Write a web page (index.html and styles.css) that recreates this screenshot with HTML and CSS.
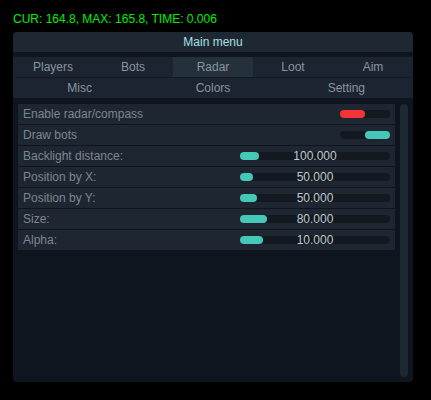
FILE: index.html
```html
<!DOCTYPE html>
<html lang="en">
<head>
    <meta charset="UTF-8">
    <meta name="viewport" content="width=device-width, initial-scale=1.0">
    <title>Main menu</title>
    <link rel="stylesheet" href="styles.css">
</head>
<body>

    <!-- Frame stats at the top -->
    <div class="stats">CUR: 164.8, MAX: 165.8, TIME: 0.006</div>

    <div class="window">
        <div class="title-bar">Main menu</div>

        <div class="tabs tabs-main">
            <div class="tab">Players</div>
            <div class="tab">Bots</div>
            <div class="tab active">Radar</div>
            <div class="tab">Loot</div>
            <div class="tab">Aim</div>
        </div>
        <div class="tabs tabs-sub">
            <div class="tab">Misc</div>
            <div class="tab">Colors</div>
            <div class="tab">Setting</div>
        </div>

        <div class="content">
            <div class="list">
                <div class="row">
                    <span class="label">Enable radar/compass</span>
                    <div class="toggle off"><div class="knob"></div></div>
                </div>
                <div class="row">
                    <span class="label">Draw bots</span>
                    <div class="toggle on"><div class="knob"></div></div>
                </div>
                <div class="row">
                    <span class="label">Backlight distance:</span>
                    <div class="slider">
                        <div class="fill" style="width: 19px"></div>
                        <span class="value">100.000</span>
                    </div>
                </div>
                <div class="row">
                    <span class="label">Position by X:</span>
                    <div class="slider">
                        <div class="fill" style="width: 13px"></div>
                        <span class="value">50.000</span>
                    </div>
                </div>
                <div class="row">
                    <span class="label">Position by Y:</span>
                    <div class="slider">
                        <div class="fill" style="width: 17px"></div>
                        <span class="value">50.000</span>
                    </div>
                </div>
                <div class="row">
                    <span class="label">Size:</span>
                    <div class="slider">
                        <div class="fill" style="width: 27px"></div>
                        <span class="value">80.000</span>
                    </div>
                </div>
                <div class="row">
                    <span class="label">Alpha:</span>
                    <div class="slider">
                        <div class="fill" style="width: 23px"></div>
                        <span class="value">10.000</span>
                    </div>
                </div>
            </div>
            <div class="scrollbar"></div>
        </div>
    </div>

</body>
</html>
```

FILE: styles.css
```css
body {
    margin: 0;
    background-color: #000;
    font-family: "Liberation Sans", Arial, sans-serif;
    font-size: 12px;
}

.stats {
    color: #00f000;
    padding: 12px 0 0 13px;
    line-height: 14px;
    height: 20px;
}

.window {
    margin-left: 13px;
    width: 400px;
    height: 350px;
    background-color: #0f151e;
    border-radius: 4px;
    display: flex;
    flex-direction: column;
}

.title-bar {
    height: 20px;
    line-height: 20px;
    text-align: center;
    color: #a6e0e2;
    background-color: #1e2833;
    border-radius: 4px 4px 0 0;
    margin-bottom: 5px;
}

.tabs {
    display: grid;
    background-color: #1b2430;
}

.tabs-main {
    grid-template-columns: repeat(5, 1fr);
    border-bottom: 1px solid #141b24;
}

.tabs-sub {
    grid-template-columns: repeat(3, 1fr);
    margin-bottom: 6px;
}

.tab {
    height: 20px;
    line-height: 20px;
    text-align: center;
    color: #8894a0;
}

.tab.active {
    background-color: #24303c;
}

/* List with scrollbar */
.content {
    flex: 1;
    display: flex;
    gap: 5px;
    padding: 0 5px 5px 5px;
}

.list {
    flex: 1;
    display: flex;
    flex-direction: column;
    gap: 1px;
}

.row {
    height: 20px;
    line-height: 20px;
    background-color: #1e2731;
    display: flex;
    align-items: center;
    justify-content: space-between;
    padding: 0 5px;
}

.label {
    color: #7b8691;
}

.scrollbar {
    width: 8px;
    background-color: #1e2833;
    border-radius: 4px;
}

.toggle {
    width: 50px;
    height: 8px;
    border-radius: 4px;
    background-color: #121921;
    display: flex;
}

.toggle .knob {
    width: 25px;
    height: 8px;
    border-radius: 4px;
}

.toggle.off .knob {
    background-color: #f23434;
}

.toggle.on {
    justify-content: flex-end;
}

.toggle.on .knob {
    background-color: #46c8b9;
}

.slider {
    position: relative;
    width: 150px;
    height: 8px;
    border-radius: 4px;
    background-color: #121921;
}

.slider .fill {
    height: 8px;
    border-radius: 4px;
    background-color: #46c8b9;
}

.slider .value {
    position: absolute;
    left: 0;
    right: 0;
    top: -6px;
    line-height: 20px;
    text-align: center;
    color: #c3c8cd;
}
```
